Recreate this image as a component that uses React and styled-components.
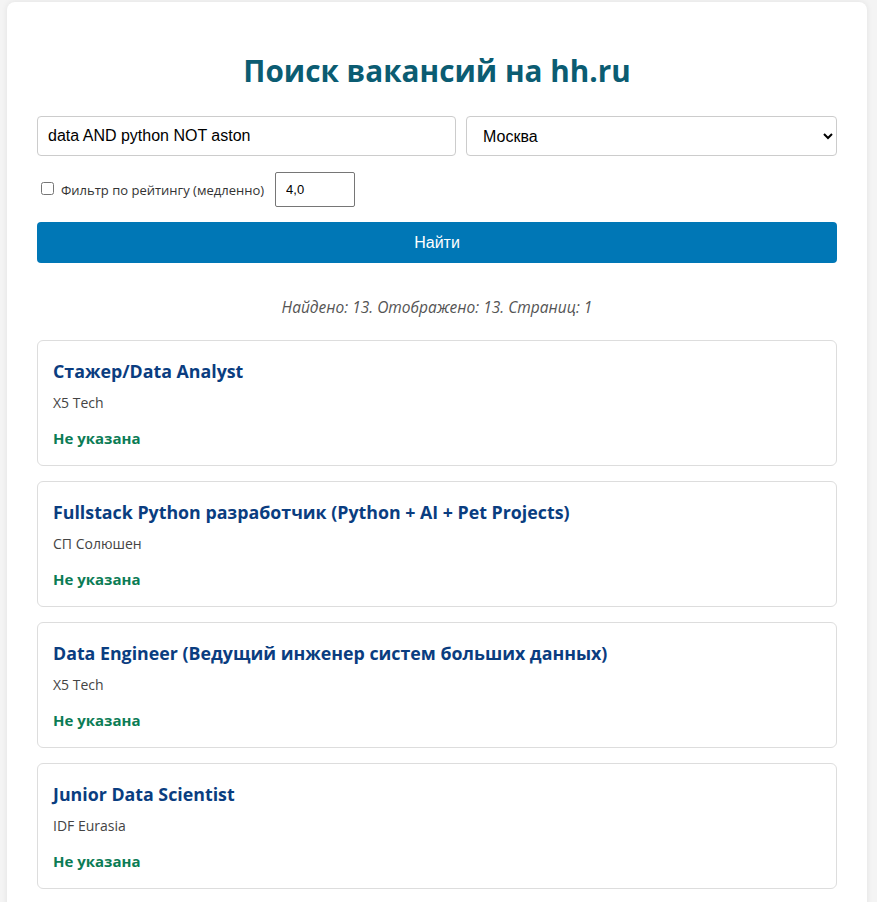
import React, { useState } from "react";
import styled, { createGlobalStyle } from "styled-components";

const GlobalStyle = createGlobalStyle`
  html, body {
    margin: 0;
    padding: 0;
    background: #f4f4f4;
    font-family: "Open Sans", "Noto Sans", sans-serif;
  }
`;

const Page = styled.div`
  padding: 2px 10px 0 7px;
`;

const Container = styled.div`
  width: 860px;
  box-sizing: border-box;
  background: #fff;
  border-radius: 8px;
  box-shadow: 0 0 6px rgba(0, 0, 0, 0.08);
  padding: 30px;
`;

const Title = styled.h1`
  margin: 19px 0 25px;
  font-size: 29.7px;
  line-height: 40px;
  font-weight: 700;
  text-align: center;
  color: #0b5c72;
`;

const SearchRow = styled.div`
  display: flex;
  gap: 10px;
`;

const fieldBase = `
  box-sizing: border-box;
  height: 40px;
  border: 1px solid #ccc;
  border-radius: 4px;
  padding: 0 10px;
  font-family: "Liberation Sans", Arial, sans-serif;
  font-size: 16px;
  color: #000;
  background: #fff;
`;

const QueryInput = styled.input`
  ${fieldBase}
  flex: 0 0 419px;
`;

const CitySelect = styled.select`
  ${fieldBase}
  flex: 1;
  padding: 0 8px 0 12px;
`;

const FilterRow = styled.div`
  display: flex;
  align-items: center;
  margin-top: 16px;
  padding-left: 4px;
  font-size: 13px;
  color: #333;
`;

const Check = styled.input`
  width: 13px;
  height: 13px;
  margin: 0 7px 2px 0;
`;

const RatingInput = styled.input`
  box-sizing: border-box;
  width: 80px;
  height: 35px;
  margin-left: 11px;
  border: 1px solid #767676;
  border-radius: 2px;
  padding: 0 10px;
  font-family: "Liberation Sans", Arial, sans-serif;
  font-size: 13px;
`;

const SearchButton = styled.button`
  display: block;
  width: 100%;
  height: 41px;
  margin-top: 15px;
  border: 0;
  border-radius: 4px;
  background: #0077b6;
  color: #fff;
  font-family: "Liberation Sans", Arial, sans-serif;
  font-size: 16px;
  cursor: pointer;
`;

const Stats = styled.p`
  margin: 34px 0 23px;
  line-height: 20px;
  font-size: 15.5px;
  font-style: italic;
  text-align: center;
  color: #555;
`;

const List = styled.div`
  display: flex;
  flex-direction: column;
  gap: 15px;
`;

const Card = styled.div`
  border: 1px solid #ddd;
  border-radius: 6px;
  padding: 15px;
`;

const JobTitle = styled.h3`
  margin: 4px 0 0;
  font-size: 17.8px;
  line-height: 22px;
  font-weight: 700;
  color: #0a3d80;
`;

const Company = styled.div`
  margin-top: 11px;
  font-size: 14px;
  line-height: 20px;
  color: #444;
`;

const Salary = styled.div`
  margin: 15px 0 2px;
  font-size: 15px;
  line-height: 20px;
  font-weight: 700;
  color: #0b7c55;
`;

const jobs = [
  { id: 1, title: "Стажер/Data Analyst", company: "X5 Tech" },
  {
    id: 2,
    title: "Fullstack Python разработчик (Python + AI + Pet Projects)",
    company: "СП Солюшен",
  },
  {
    id: 3,
    title: "Data Engineer (Ведущий инженер систем больших данных)",
    company: "X5 Tech",
  },
  { id: 4, title: "Junior Data Scientist", company: "IDF Eurasia" },
];

export default function App() {
  const [query, setQuery] = useState("data AND python NOT aston");
  const [city, setCity] = useState("1");
  const [rating, setRating] = useState("4,0");

  return (
    <>
      <GlobalStyle />
      <Page>
        <Container>
          <Title>Поиск вакансий на hh.ru</Title>
          <SearchRow>
            <QueryInput value={query} onChange={(e) => setQuery(e.target.value)} />
            <CitySelect value={city} onChange={(e) => setCity(e.target.value)}>
              <option value="1">Москва</option>
              <option value="2">Санкт-Петербург</option>
            </CitySelect>
          </SearchRow>
          <FilterRow>
            <Check type="checkbox" id="rating" />
            <label htmlFor="rating">Фильтр по рейтингу (медленно)</label>
            <RatingInput value={rating} onChange={(e) => setRating(e.target.value)} />
          </FilterRow>
          <SearchButton>Найти</SearchButton>
          <Stats>Найдено: 13. Отображено: 13. Страниц: 1</Stats>
          <List>
            {jobs.map((job) => (
              <Card key={job.id}>
                <JobTitle>{job.title}</JobTitle>
                <Company>{job.company}</Company>
                <Salary>Не указана</Salary>
              </Card>
            ))}
          </List>
        </Container>
      </Page>
    </>
  );
}
